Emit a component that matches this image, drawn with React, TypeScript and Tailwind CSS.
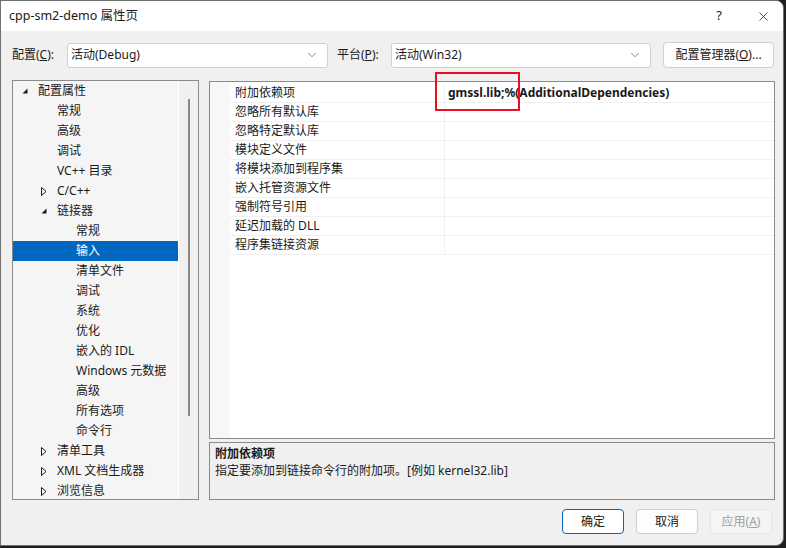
import { X, ChevronDown } from "lucide-react";

const font = "font-['Noto_Sans','Noto_Sans_CJK_SC',sans-serif]";

type TreeItem = { label: string; level: number; arrow?: "open" | "closed"; selected?: boolean };

const tree: TreeItem[] = [
  { label: "配置属性", level: 0, arrow: "open" },
  { label: "常规", level: 1 },
  { label: "高级", level: 1 },
  { label: "调试", level: 1 },
  { label: "VC++ 目录", level: 1 },
  { label: "C/C++", level: 1, arrow: "closed" },
  { label: "链接器", level: 1, arrow: "open" },
  { label: "常规", level: 2 },
  { label: "输入", level: 2, selected: true },
  { label: "清单文件", level: 2 },
  { label: "调试", level: 2 },
  { label: "系统", level: 2 },
  { label: "优化", level: 2 },
  { label: "嵌入的 IDL", level: 2 },
  { label: "Windows 元数据", level: 2 },
  { label: "高级", level: 2 },
  { label: "所有选项", level: 2 },
  { label: "命令行", level: 2 },
  { label: "清单工具", level: 1, arrow: "closed" },
  { label: "XML 文档生成器", level: 1, arrow: "closed" },
  { label: "浏览信息", level: 1, arrow: "closed" },
];

const props = [
  "附加依赖项",
  "忽略所有默认库",
  "忽略特定默认库",
  "模块定义文件",
  "将模块添加到程序集",
  "嵌入托管资源文件",
  "强制符号引用",
  "延迟加载的 DLL",
  "程序集链接资源",
];

function Arrow({ kind }: { kind: "open" | "closed" }) {
  if (kind === "open") {
    return (
      <svg width="6" height="6" viewBox="0 0 6 6">
        <polygon points="5.5,0.5 5.5,5.5 0.5,5.5" fill="#1a1a1a" />
      </svg>
    );
  }
  return (
    <svg width="6" height="9" viewBox="0 0 6 9">
      <polygon points="0.5,0.5 5,4.5 0.5,8.5" fill="none" stroke="#1a1a1a" strokeWidth="1" />
    </svg>
  );
}

function Select({ value, width }: { value: string; width: string }) {
  return (
    <div className={`${width} h-[25px] bg-white border border-[#d0d0d0] rounded-[3px] flex items-center justify-between pl-[3px] pr-[8px]`}>
      <span>{value}</span>
      <ChevronDown size={14} strokeWidth={1.2} className="text-[#555]" />
    </div>
  );
}

export default function App() {
  return (
    <div className={`w-[786px] h-[548px] bg-[#202020] relative overflow-hidden text-[12px] text-[#1a1a1a] ${font}`}>
      <div className="w-[784px] h-[546px] bg-[#f0f0f0] border border-[#707070] rounded-tr-[8px] rounded-br-[8px] flex flex-col overflow-hidden">
        {/* title bar */}
        <div className="h-[30px] bg-white flex items-center justify-between pl-[8px] pr-[12px] shrink-0">
          <span className="text-[12.5px]">cpp-sm2-demo 属性页</span>
          <div className="flex items-center gap-[34px]">
            <span className="text-[13px]">?</span>
            <X size={15} strokeWidth={1.2} />
          </div>
        </div>

        {/* config row */}
        <div className="flex items-center mt-[11px] h-[26px] pl-[11px]">
          <span className="w-[55px]">配置(<u>C</u>):</span>
          <Select value="活动(Debug)" width="w-[261px]" />
          <span className="ml-[9px] w-[54px]">平台(<u>P</u>):</span>
          <Select value="活动(Win32)" width="w-[260px]" />
          <div className="ml-[12px] w-[111px] h-[26px] bg-[#fdfdfd] border border-[#d0d0d0] rounded-[4px] flex items-center justify-center">
            配置管理器(<u>O</u>)...
          </div>
        </div>

        {/* main */}
        <div className="flex mt-[12px] pl-[11px] h-[420px]">
          {/* tree */}
          <div className="w-[187px] h-[420px] border border-[#8a8a8a] bg-[#f0f0f0] flex overflow-hidden">
            <div className="w-[166px] bg-[#f5f5f5] border-r border-white flex flex-col">
              {tree.map((t, i) => (
                <div
                  key={i}
                  className={`h-[20px] shrink-0 flex items-center ${t.selected ? "bg-[#0067c0] text-white" : ""}`}
                  style={{ paddingLeft: 9 + t.level * 19 }}
                >
                  <span className="w-[16px] flex items-center">
                    {t.arrow && <Arrow kind={t.arrow} />}
                  </span>
                  <span className="whitespace-nowrap">{t.label}</span>
                </div>
              ))}
            </div>
            <div className="flex-1 flex justify-center pt-[18px]">
              <div className="w-[2px] h-[317px] bg-[#8a8a8a]" />
            </div>
          </div>

          {/* right side */}
          <div className="ml-[10px] w-[566px] flex flex-col">
            <div className="mt-[1px] h-[358px] border border-[#8a8a8a] bg-white flex">
              <div className="w-[20px] bg-[#f7f7f7]" />
              <div className="flex-1 flex flex-col pt-[2px]">
                {props.map((p, i) => (
                  <div key={i} className="h-[19px] flex border-b border-[#f0f0f0]">
                    <div className="w-[215px] border-r border-[#f0f0f0] pl-[5px] flex items-center">{p}</div>
                    <div className="flex-1 pl-[3px] flex items-center font-bold">
                      {i === 0 ? "gmssl.lib;%(AdditionalDependencies)" : ""}
                    </div>
                  </div>
                ))}
              </div>
            </div>
            <div className="mt-[3px] h-[58px] border border-[#8a8a8a] bg-[#f0f0f0] pl-[5px] pt-[2px] flex flex-col">
              <span className="font-bold leading-[18px]">附加依赖项</span>
              <span className="leading-[16px]">指定要添加到链接命令行的附加项。[例如 kernel32.lib]</span>
            </div>
          </div>
        </div>

        {/* buttons */}
        <div className="flex justify-end gap-[12px] pr-[11px] mt-[9px]">
          <div className="w-[62px] h-[25px] bg-white border border-[#0067c0] rounded-[4px] flex items-center justify-center">确定</div>
          <div className="w-[62px] h-[25px] bg-[#fdfdfd] border border-[#d0d0d0] rounded-[4px] flex items-center justify-center">取消</div>
          <div className="w-[62px] h-[25px] bg-[#f5f5f5] border border-[#e5e5e5] rounded-[4px] flex items-center justify-center text-[#a0a0a0]">
            应用(<u>A</u>)
          </div>
        </div>
      </div>

      {/* red annotation */}
      <div className="absolute left-[435px] top-[72px] w-[85px] h-[39px] border-2 border-[#e81123]" />
    </div>
  );
}
